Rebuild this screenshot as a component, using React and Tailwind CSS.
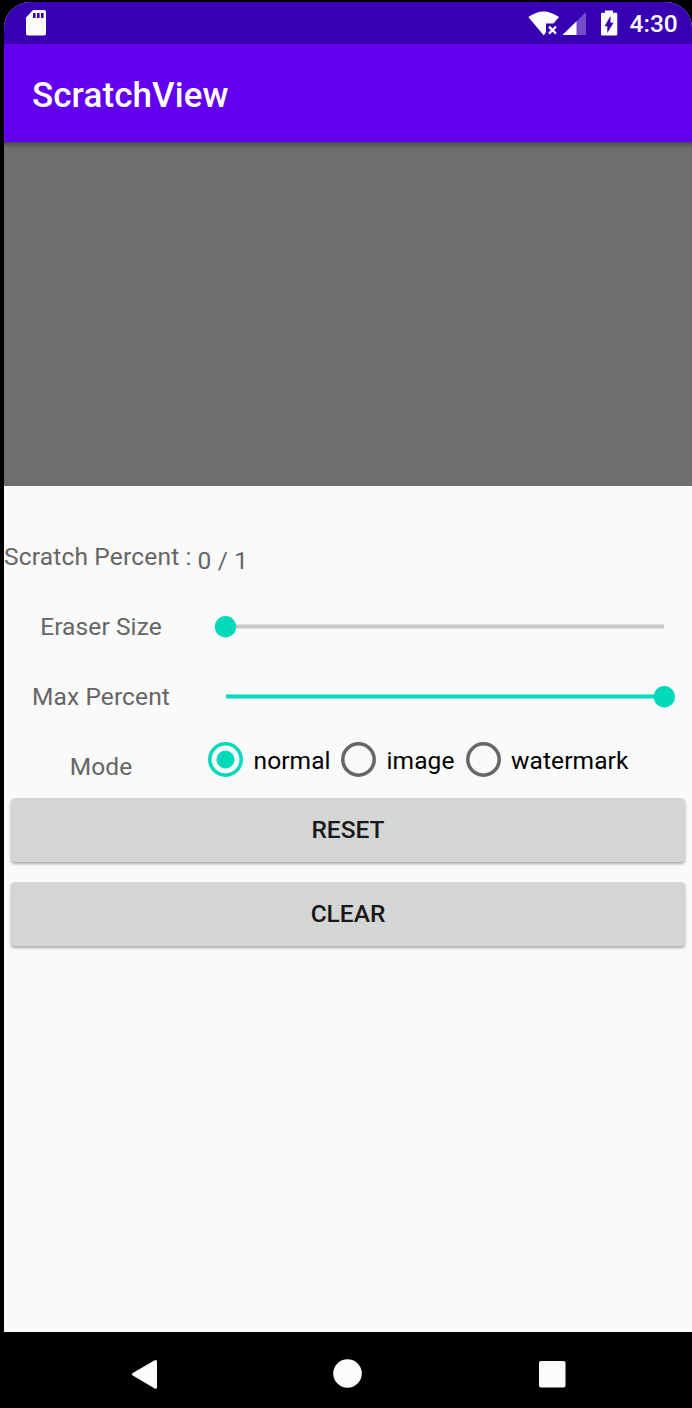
import React from "react";

function StatusBar() {
  return (
    <div className="flex h-[42px] w-full bg-[#3700b3]">
      <svg width="688" height="42" viewBox="4 2 688 42" className="block">
        <path d="M33 10H44Q46 10 46 12V33.500Q46 35.500 44 35.500H28Q26 35.500 26 33.500V17.500Z" fill="#fcfcfc" />
        <path d="M33 13h2.600v5H33zM37 13h2.600v5H37zM41 13h2.600v5H41z" fill="#3700b3" />
        <path d="M528.300 17Q543.500 5.800 559 17L553.500 23.500H546V32L543.800 35.500Z" fill="#fcfcfc" />
        <path d="M549 26.600L556 33.600M556 26.600L549 33.600" stroke="#fcfcfc" strokeWidth="2.200" />
        <path d="M586 12V35H562.500Z" fill="#fcfcfc" fillOpacity="0.3" />
        <path d="M576.500 21.300V35H562.500Z" fill="#fcfcfc" />
        <path d="M605 10.500H613V12.800H616Q617.300 12.800 617.300 14.100V34.200Q617.300 35.500 616 35.500H602.300Q601 35.500 601 34.200V14.100Q601 12.800 602.300 12.800H605Z" fill="#fcfcfc" />
        <path d="M610.500 16V22.800H613.600L607.300 33V26.200H604.600Z" fill="#3700b3" />
        <text x="629.500" y="32" fontFamily="Roboto, sans-serif" fontSize="24.500" fontWeight="500" fill="#fcfcfc">4:30</text>
      </svg>
    </div>
  );
}

function Label({ children }) {
  return <div className="w-[194px] shrink-0 pb-px text-center tracking-[0.1px] text-[#666]">{children}</div>;
}

function Slider({ full }) {
  return (
    <svg width="494" height="40" viewBox="198 0 494 40" className="block">
      <rect x="226" y="17.500" width="438" height="4" fill={full ? "#00dabb" : "#c6c6c6"} />
      <circle cx={full ? 664.300 : 225.500} cy="19.700" r="10.700" fill="#00dabb" />
    </svg>
  );
}

function Radio({ label, checked, width }) {
  const color = checked ? "#00dabb" : "#666";
  return (
    <div className={`flex shrink-0 items-center text-black ${width}`}>
      <svg width="35" height="35" viewBox="0 0 35 35" className="block shrink-0">
        <circle cx="17.500" cy="17.500" r="15.700" fill="none" stroke={color} strokeWidth="3.500" />
        {checked && <circle cx="17.500" cy="17.500" r="9" fill={color} />}
      </svg>
      <span className="ml-[10.500px] whitespace-nowrap pt-px tracking-[0.1px]">{label}</span>
    </div>
  );
}

function Button({ children }) {
  return (
    <button className="flex h-16 w-full items-center justify-center rounded-[4px] bg-[#d4d5d5] pb-px text-[24.500px] font-medium text-[#191919] shadow-[0_2px_3px_rgba(0,0,0,0.32)]">
      {children}
    </button>
  );
}

export default function App() {
  return (
    <div className="flex h-[1408px] w-[692px] flex-col bg-black pt-[2px] pl-1 font-['Roboto',sans-serif] text-[24.500px] leading-[29px]">
      <div className="flex h-[1330px] w-[688px] shrink-0 flex-col overflow-hidden rounded-t-[26px] bg-[#fafafa]">
        <StatusBar />
        <header className="flex h-[98px] shrink-0 items-center bg-[#6200ee] pt-[5px] pl-7 text-[35px] leading-[42px] font-medium tracking-[0.08px] text-white">
          ScratchView
        </header>
        <div className="h-[344px] shrink-0 bg-[#6f6f6f] shadow-[inset_0_6px_5px_-3px_rgba(0,0,0,0.35)]" />
        <div className="flex h-[84px] shrink-0 items-end text-[#666]">
          <span className="mb-[-1px] w-[193.500px] whitespace-nowrap tracking-[0.18px]">Scratch Percent :</span>
          <span className="mb-[-5px] whitespace-nowrap tracking-[0.2px]">0 / 1</span>
        </div>
        <div className="flex h-[70px] shrink-0 items-center pt-[44px]">
          <Label>Eraser Size</Label>
          <Slider />
        </div>
        <div className="flex h-[70px] shrink-0 items-center pt-[44px]">
          <Label>Max Percent</Label>
          <Slider full />
        </div>
        <div className="flex h-[70px] shrink-0 items-center pt-[44px]">
          <Label>Mode</Label>
          <div className="mb-[15px] flex pl-[10px]">
            <Radio label="normal" checked width="w-[133px]" />
            <Radio label="image" width="w-[124.500px]" />
            <Radio label="watermark" width="w-[170px]" />
          </div>
        </div>
        <div className="flex flex-col gap-5 pt-[18px] pr-[7px] pl-[7px]">
          <Button>RESET</Button>
          <Button>CLEAR</Button>
        </div>
      </div>
      <nav className="h-[76px] shrink-0 bg-black">
        <svg width="688" height="76" viewBox="4 1332 688 76" className="block">
          <path d="M155.500 1361.500L133.500 1374.300L155.500 1387.200Z" fill="#fcfcfc" stroke="#fcfcfc" strokeWidth="3" strokeLinejoin="round" />
          <circle cx="347.500" cy="1373.500" r="14.300" fill="#fcfcfc" />
          <rect x="539" y="1361" width="26.500" height="26.500" rx="2" fill="#fcfcfc" />
        </svg>
      </nav>
    </div>
  );
}
